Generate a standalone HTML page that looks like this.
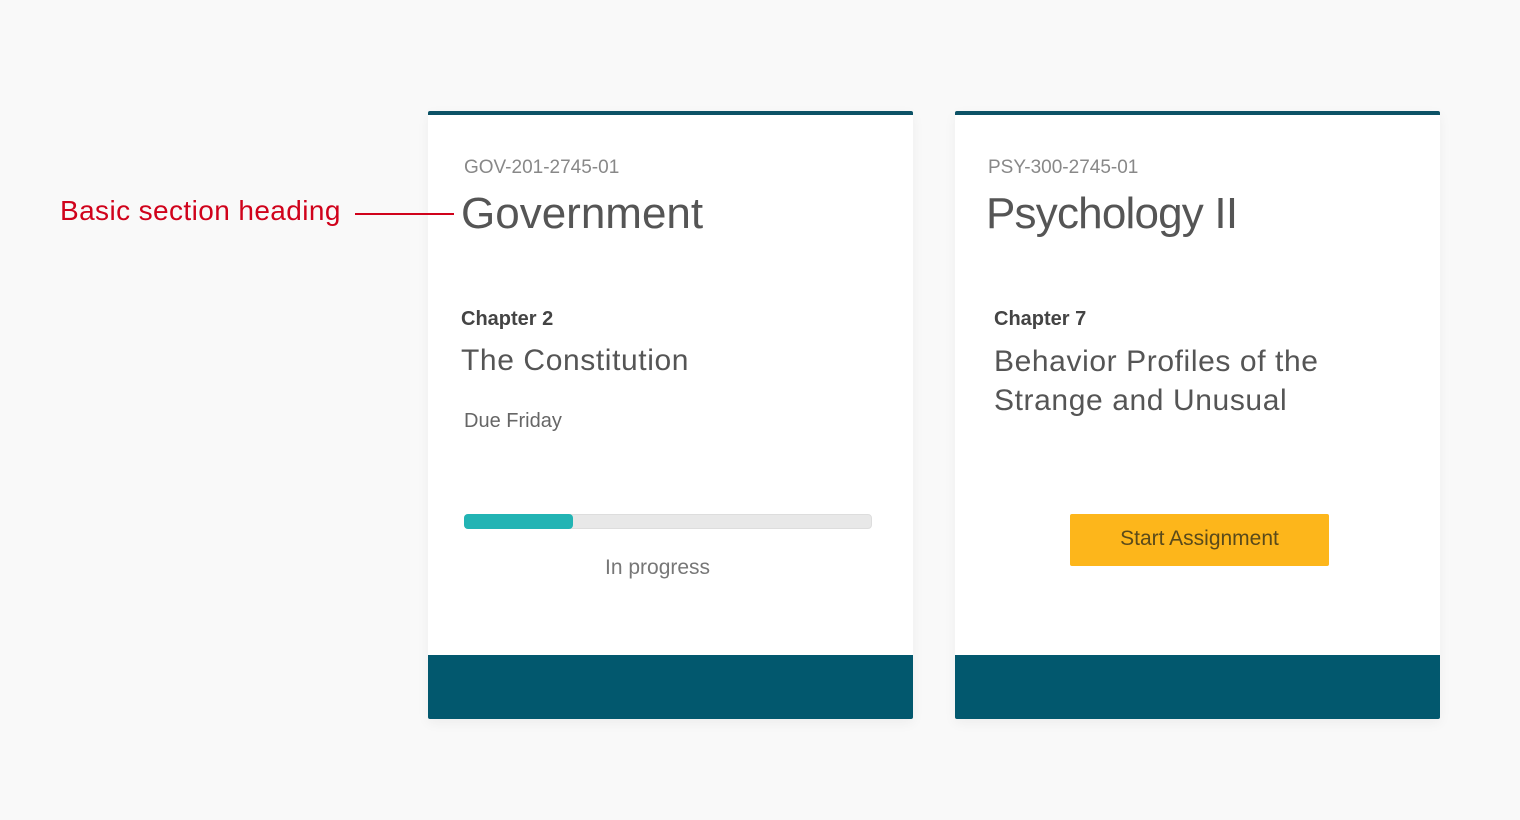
<!DOCTYPE html>
<html><head><style>
body{margin:0;width:1520px;height:820px;background:#f9f9f9;font-family:"Liberation Sans",sans-serif;position:relative;overflow:hidden}
.a{position:absolute;white-space:nowrap}
.card{position:absolute;top:111px;width:485px;height:608px;background:#fff;border-top:4px solid #0c5266;box-sizing:border-box;border-radius:2px;box-shadow:0 4px 12px rgba(0,0,0,0.05)}
.foot{position:absolute;left:0;right:0;bottom:0;height:64px;background:#02586e;border-radius:0 0 2px 2px}
</style></head><body>
<div class="a" style="left:60px;top:195px;font-size:28px;letter-spacing:0.4px;color:#d0021b">Basic section heading</div>

<div class="card" style="left:428px">
<div class="a" style="left:36px;top:42px;font-size:19px;color:#888">GOV-201-2745-01</div>
<div class="a" style="left:33px;top:74px;font-size:44px;color:#555;font-weight:300">Government</div>
<div class="a" style="left:33px;top:193px;font-size:20px;color:#444;font-weight:600">Chapter 2</div>
<div class="a" style="left:33px;top:229px;font-size:30px;color:#555;letter-spacing:0.6px">The Constitution</div>
<div class="a" style="left:36px;top:295px;font-size:20px;color:#666">Due Friday</div>
<div class="a" style="left:36px;top:399px;width:408px;height:15px;background:#e8e8e8;border:1px solid #ddd;border-radius:4px;box-sizing:border-box"></div>
<div class="a" style="left:36px;top:399px;width:109px;height:15px;background:#22b4b4;border-radius:4px"></div>
<div class="a" style="left:177px;top:441px;font-size:21px;color:#777">In progress</div>
<div class="foot"></div>
</div>
<div class="a" style="left:355px;top:213px;width:99px;height:2px;background:#d0021b;z-index:5"></div>

<div class="card" style="left:955px">
<div class="a" style="left:33px;top:42px;font-size:19px;color:#888">PSY-300-2745-01</div>
<div class="a" style="left:31px;top:74px;font-size:44px;color:#555;font-weight:300;letter-spacing:-0.8px">Psychology II</div>
<div class="a" style="left:39px;top:193px;font-size:20px;color:#444;font-weight:600">Chapter 7</div>
<div class="a" style="left:39px;top:227px;font-size:30px;color:#555;line-height:39px;letter-spacing:0.6px">Behavior Profiles of the<br>Strange and Unusual</div>
<div class="a" style="left:115px;top:399px;width:259px;height:52px;background:#fdb61b;border-radius:2px;color:#5a4a1a;font-size:21px;text-align:center;line-height:50px">Start Assignment</div>
<div class="foot"></div>
</div>
</body></html>
